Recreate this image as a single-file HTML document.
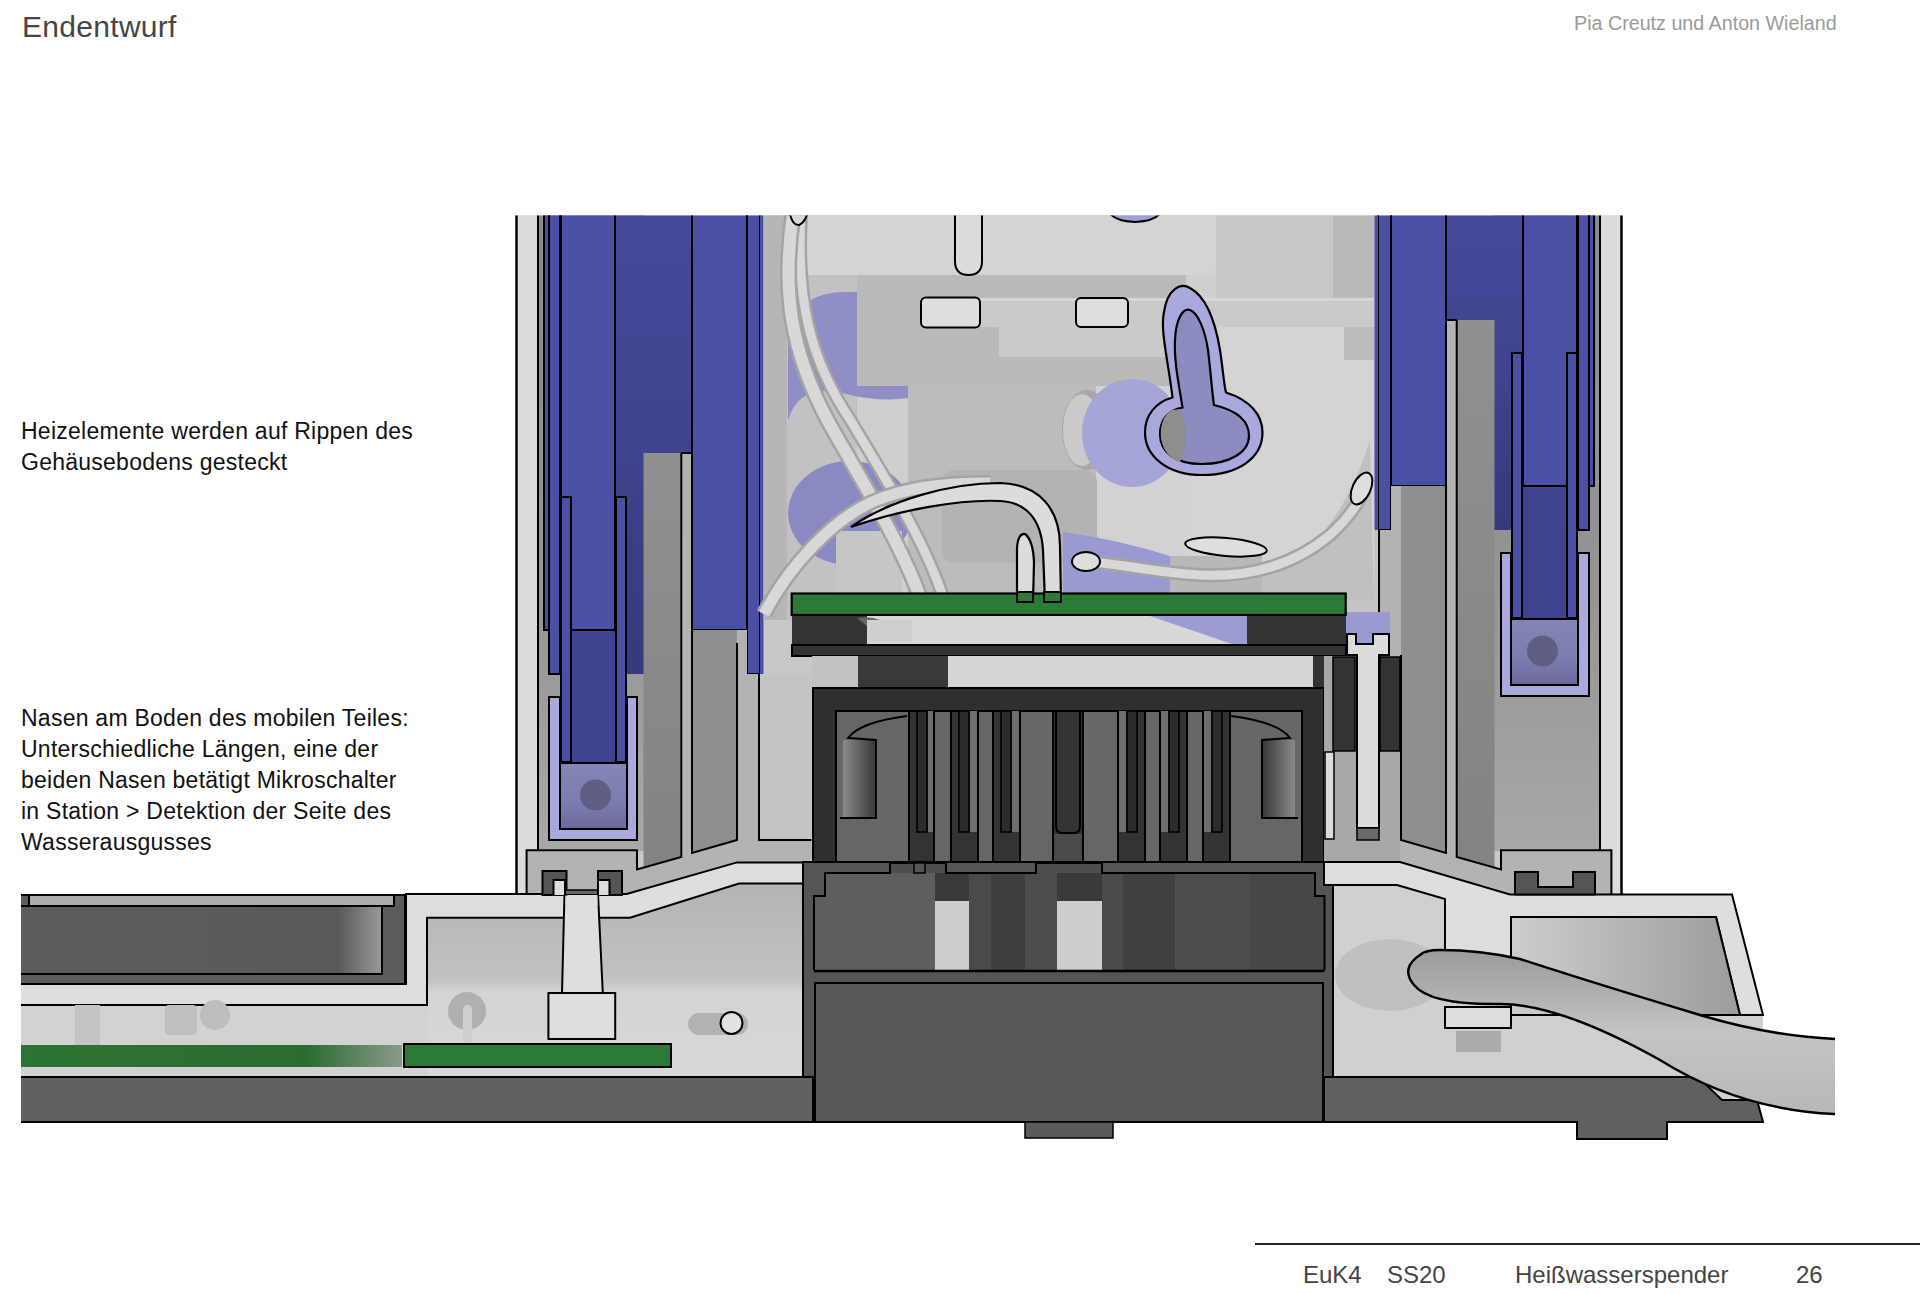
<!DOCTYPE html>
<html><head><meta charset="utf-8">
<style>
html,body{margin:0;padding:0;background:#fff;}
body{width:1920px;height:1294px;position:relative;overflow:hidden;font-family:"Liberation Sans",sans-serif;}
.t{position:absolute;white-space:nowrap;transform-origin:0 0;}
#title{left:22px;top:10px;font-size:30px;letter-spacing:0.3px;color:#454545;}
#authors{left:1574px;top:11.5px;font-size:19.7px;color:#9a9a9a;}
.p{left:21px;font-size:23px;color:#111;line-height:31px;letter-spacing:0.25px;}
#p1{top:416px;}
#p2{top:702.5px;}
#rule{position:absolute;left:1255px;top:1243px;width:665px;height:2px;background:#222;}
.f{top:1261px;font-size:24px;color:#444;}
svg{position:absolute;left:0;top:0;}
</style></head><body>
<svg width="1920" height="1294" viewBox="0 0 1920 1294">
<clipPath id="clipTop"><rect x="0" y="215.5" width="1920" height="1079"/></clipPath>
<g clip-path="url(#clipTop)"><defs>
<linearGradient id="gRecess" x1="0" x2="0" y1="0" y2="1"><stop offset="0" stop-color="#464a9a"/><stop offset="0.5" stop-color="#40438e"/><stop offset="1" stop-color="#36397a"/></linearGradient>
<linearGradient id="gZone" x1="0" x2="0" y1="0" y2="1"><stop offset="0" stop-color="#8a8a8a"/><stop offset="0.6" stop-color="#959595"/><stop offset="1" stop-color="#a8a8a8"/></linearGradient>
<linearGradient id="gBox" x1="0" x2="1" y1="0" y2="0"><stop offset="0" stop-color="#cdcdcd"/><stop offset="1" stop-color="#9c9c9c"/></linearGradient>
<linearGradient id="gRibV" x1="0" x2="0" y1="0" y2="1"><stop offset="0" stop-color="#909090"/><stop offset="1" stop-color="#838383"/></linearGradient>
<linearGradient id="gSq" x1="0" x2="0" y1="0" y2="1"><stop offset="0" stop-color="#8585b5"/><stop offset="0.6" stop-color="#7c7cae"/><stop offset="1" stop-color="#6a6a9c"/></linearGradient>
<linearGradient id="gPcbFade" x1="0" x2="1" y1="0" y2="0"><stop offset="0" stop-color="#2b7434"/><stop offset="0.75" stop-color="#2c6c30"/><stop offset="1" stop-color="#8a9a8a"/></linearGradient>
<linearGradient id="gCable" x1="0" x2="0" y1="0" y2="1"><stop offset="0" stop-color="#9a9a9a"/><stop offset="0.5" stop-color="#c4c4c4"/><stop offset="1" stop-color="#b8b8b8"/></linearGradient>
</defs>
<rect x="516.0" y="215.0" width="1106.0" height="680.0" fill="#c8c8c8" />
<rect x="763.0" y="215.0" width="611.0" height="405.0" fill="#cdcdcd" />
<rect x="516.5" y="215.0" width="21.0" height="680.0" fill="#dcdcdc" />
<polyline points="516.5,215.0 516.5,895.0" fill="none" stroke="#000" stroke-width="2.5" stroke-linejoin="miter" />
<polyline points="538.0,215.0 538.0,851.0" fill="none" stroke="#000" stroke-width="2" stroke-linejoin="miter" />
<rect x="1600.5" y="215.0" width="21.0" height="680.0" fill="#dcdcdc" />
<polyline points="1621.5,215.0 1621.5,895.0" fill="none" stroke="#000" stroke-width="2.5" stroke-linejoin="miter" />
<polyline points="1600.0,215.0 1600.0,851.0" fill="none" stroke="#000" stroke-width="2" stroke-linejoin="miter" />
<rect x="539.0" y="215.0" width="105.0" height="636.0" fill="url(#gZone)" />
<rect x="1494.0" y="215.0" width="105.0" height="636.0" fill="url(#gZone)" />
<polygon points="616.0,205.0 692.0,205.0 692.0,674.0 616.0,674.0" fill="url(#gRecess)" />
<polygon points="544.0,205.0 549.0,205.0 549.0,630.0 544.0,630.0" fill="#4b50a5" stroke="#000" stroke-width="2" stroke-linejoin="miter" />
<polygon points="549.0,205.0 560.0,205.0 560.0,674.0 549.0,674.0" fill="#4b50a5" stroke="#000" stroke-width="2" stroke-linejoin="miter" />
<polygon points="561.0,205.0 615.0,205.0 615.0,630.0 561.0,630.0" fill="#4b50a5" stroke="#000" stroke-width="2" stroke-linejoin="miter" />
<polygon points="572.0,631.0 615.0,631.0 615.0,763.0 572.0,763.0" fill="#3f428f" />
<polygon points="549.0,697.0 560.0,697.0 560.0,829.0 627.0,829.0 627.0,697.0 637.0,697.0 637.0,840.0 549.0,840.0" fill="#a9a9dd" stroke="#000" stroke-width="2" stroke-linejoin="miter" />
<polygon points="560.0,763.0 627.0,763.0 627.0,829.0 560.0,829.0" fill="url(#gSq)" stroke="#000" stroke-width="2" stroke-linejoin="miter" />
<circle cx="595.5" cy="795" r="15.5" fill="#5f5f84"/>
<polygon points="561.0,497.0 571.0,497.0 571.0,762.0 561.0,762.0" fill="#4b50a5" stroke="#000" stroke-width="2" stroke-linejoin="miter" />
<polygon points="616.0,497.0 626.0,497.0 626.0,762.0 616.0,762.0" fill="#4b50a5" stroke="#000" stroke-width="2" stroke-linejoin="miter" />
<polygon points="692.0,205.0 747.0,205.0 747.0,630.0 692.0,630.0" fill="#4b50a5" stroke="#000" stroke-width="2" stroke-linejoin="miter" />
<polygon points="747.0,205.0 760.0,205.0 760.0,674.0 747.0,674.0" fill="#4b50a5" stroke="#000" stroke-width="2" stroke-linejoin="miter" />
<polygon points="760.0,205.0 763.5,205.0 763.5,674.0 760.0,674.0" fill="#4b50a5" />
<polygon points="1522.0,205.0 1446.0,205.0 1446.0,530.0 1522.0,530.0" fill="url(#gRecess)" />
<polygon points="1594.0,205.0 1589.0,205.0 1589.0,486.0 1594.0,486.0" fill="#4b50a5" stroke="#000" stroke-width="2" stroke-linejoin="miter" />
<polygon points="1589.0,205.0 1578.0,205.0 1578.0,530.0 1589.0,530.0" fill="#4b50a5" stroke="#000" stroke-width="2" stroke-linejoin="miter" />
<polygon points="1577.0,205.0 1523.0,205.0 1523.0,486.0 1577.0,486.0" fill="#4b50a5" stroke="#000" stroke-width="2" stroke-linejoin="miter" />
<polygon points="1566.0,487.0 1523.0,487.0 1523.0,619.0 1566.0,619.0" fill="#3f428f" />
<polygon points="1589.0,553.0 1578.0,553.0 1578.0,685.0 1511.0,685.0 1511.0,553.0 1501.0,553.0 1501.0,696.0 1589.0,696.0" fill="#a9a9dd" stroke="#000" stroke-width="2" stroke-linejoin="miter" />
<polygon points="1578.0,619.0 1511.0,619.0 1511.0,685.0 1578.0,685.0" fill="url(#gSq)" stroke="#000" stroke-width="2" stroke-linejoin="miter" />
<circle cx="1542.5" cy="651" r="15.5" fill="#5f5f84"/>
<polygon points="1577.0,353.0 1567.0,353.0 1567.0,618.0 1577.0,618.0" fill="#4b50a5" stroke="#000" stroke-width="2" stroke-linejoin="miter" />
<polygon points="1522.0,353.0 1512.0,353.0 1512.0,618.0 1522.0,618.0" fill="#4b50a5" stroke="#000" stroke-width="2" stroke-linejoin="miter" />
<polygon points="1446.0,205.0 1391.0,205.0 1391.0,486.0 1446.0,486.0" fill="#4b50a5" stroke="#000" stroke-width="2" stroke-linejoin="miter" />
<polygon points="1391.0,205.0 1378.0,205.0 1378.0,530.0 1391.0,530.0" fill="#4b50a5" stroke="#000" stroke-width="2" stroke-linejoin="miter" />
<polygon points="1378.0,205.0 1374.5,205.0 1374.5,530.0 1378.0,530.0" fill="#4b50a5" />
<polygon points="681.0,453.0 692.0,453.0 692.0,630.0 747.0,630.0 747.0,674.0 759.0,674.0 759.0,840.0 811.5,840.0 811.5,862.0 737.0,862.0 620.0,895.0 526.6,895.0 526.6,850.3 637.0,850.3 637.0,869.5 681.0,857.0" fill="#b3b3b3" />
<polygon points="643.5,453.0 681.3,453.0 681.3,857.0 637.5,869.5 643.5,868.0" fill="url(#gRibV)" />
<polyline points="681.3,453.0 681.3,857.0 637.0,869.5 637.0,850.3 526.6,850.3 526.6,895.0" fill="none" stroke="#000" stroke-width="2" stroke-linejoin="miter" />
<polyline points="681.3,453.0 692.0,453.0 692.0,630.0" fill="none" stroke="#000" stroke-width="2" stroke-linejoin="miter" />
<polygon points="692.0,630.0 737.0,630.0 737.0,840.0 692.0,853.0" fill="#8f8f8f" />
<polyline points="692.0,630.0 692.0,853.0 737.0,840.0 737.0,643.0" fill="none" stroke="#000" stroke-width="2" stroke-linejoin="miter" />
<polygon points="759.0,674.0 811.5,674.0 811.5,840.0 759.0,840.0" fill="#c4c4c4" />
<polyline points="759.0,674.0 759.0,840.0 811.5,840.0" fill="none" stroke="#000" stroke-width="2" stroke-linejoin="miter" />
<polygon points="1457.0,320.0 1446.0,320.0 1446.0,486.0 1391.0,486.0 1391.0,530.0 1379.0,530.0 1379.0,840.0 1326.5,840.0 1326.5,862.0 1401.0,862.0 1518.0,895.0 1611.4,895.0 1611.4,850.3 1501.0,850.3 1501.0,869.5 1457.0,857.0" fill="#b3b3b3" />
<polygon points="1494.5,320.0 1456.7,320.0 1456.7,857.0 1500.5,869.5 1494.5,868.0" fill="url(#gRibV)" />
<polyline points="1456.7,320.0 1456.7,857.0 1501.0,869.5 1501.0,850.3 1611.4,850.3 1611.4,895.0" fill="none" stroke="#000" stroke-width="2" stroke-linejoin="miter" />
<polyline points="1456.7,320.0 1446.0,320.0 1446.0,486.0" fill="none" stroke="#000" stroke-width="2" stroke-linejoin="miter" />
<polygon points="1446.0,486.0 1401.0,486.0 1401.0,840.0 1446.0,853.0" fill="#8f8f8f" />
<polyline points="1446.0,486.0 1446.0,853.0 1401.0,840.0 1401.0,655.0" fill="none" stroke="#000" stroke-width="2" stroke-linejoin="miter" />
<polygon points="1379.0,530.0 1326.5,530.0 1326.5,840.0 1379.0,840.0" fill="#c4c4c4" />
<polyline points="1379.0,530.0 1379.0,840.0 1326.5,840.0" fill="none" stroke="#000" stroke-width="2" stroke-linejoin="miter" />
<rect x="763.5" y="215.0" width="36.5" height="405.0" fill="#b6b6b6" />
<rect x="800.0" y="215.0" width="574.0" height="385.0" fill="#cfcfcf" />
<path d="M800,215 H1216 V268 Q1216,275 1209,275 H808 Q800,275 800,268 Z" fill="#d4d4d4"/>
<rect x="787.0" y="275.0" width="70.0" height="345.0" fill="#c2c2c2" />
<path d="M788,330 Q800,290 850,292 L909,292 L909,398 Q880,402 850,395 Q800,380 788,420 Z" fill="#8f8fc6"/>
<ellipse cx="850" cy="513" rx="62" ry="52" fill="#8a8ac2"/>
<rect x="857.0" y="275.0" width="329.0" height="111.0" fill="#bababa" />
<rect x="908.0" y="386.0" width="188.0" height="207.0" fill="#bcbcbc" />
<rect x="1216.0" y="215.0" width="158.0" height="385.0" fill="#c8c8c8" />
<rect x="1333.0" y="216.0" width="41.0" height="82.0" fill="#bababa" />
<rect x="1186.0" y="327.0" width="188.0" height="273.0" fill="#d4d4d4" />
<rect x="1096.0" y="386.0" width="90.0" height="214.0" fill="#d2d2d2" />
<rect x="1344.0" y="327.0" width="30.0" height="33.0" fill="#bcbcbc" />
<path d="M1090,520 Q1120,600 1230,585 Q1330,570 1370,440 L1374,600 L1090,600 Z" fill="#c0c0c0"/>
<rect x="999.0" y="327.0" width="187.0" height="30.0" fill="#cbcbcb" />
<rect x="980.0" y="298.0" width="394.0" height="29.0" fill="#cacaca" />
<rect x="980.0" y="298.0" width="394.0" height="3.0" fill="#d6d6d6" />
<rect x="921" y="297.5" width="59" height="30" rx="5" fill="#dedede" stroke="#000" stroke-width="2"/>
<rect x="1076" y="298" width="52" height="29" rx="5" fill="#dedede" stroke="#000" stroke-width="2"/>
<path d="M955,205 V261 Q955,275 968.5,275 Q982,275 982,261 V205" fill="#dcdcdc" stroke="#000" stroke-width="2"/>
<path d="M1108,210 Q1112,221 1135,222 Q1158,221 1162,210 Z" fill="#a0a0d6" stroke="#000" stroke-width="2"/>
<rect x="836.0" y="531.0" width="66.0" height="62.0" fill="#c6c6c6" />
<rect x="942" y="470" width="155" height="93" rx="12" fill="#b3b3b3"/>
<path d="M1063,532 Q1120,540 1170,556 L1170,593 L1063,593 Z" fill="#9a9ad2"/>
<rect x="1190.0" y="612.0" width="200.0" height="34.0" fill="#9a9ad2" />
<rect x="1170.0" y="556.0" width="92.0" height="37.0" fill="#b8b8b8" />
<ellipse cx="1087" cy="430" rx="25" ry="40" fill="#a8a8a8"/>
<ellipse cx="1082" cy="430" rx="19" ry="36" fill="#cacaca"/>
<ellipse cx="1132" cy="433" rx="50" ry="54" fill="#a5a5d8"/>
<path d="M1172.5,397.5 C1168,360 1160,330 1164,312 C1167,290 1180,282 1190,288 C1205,296 1215,320 1220,350 C1223,370 1224,385 1226,392.5 C1250,400 1262.5,415 1262.5,432.5 C1262.5,458 1238,475 1202.5,475 C1167,475 1145,456 1145,432.5 C1145,415 1156,402 1172.5,397.5 Z" fill="#a9a9dd" stroke="#000" stroke-width="2.2"/>
<path d="M1182.5,407.5 C1178,380 1174,360 1175,340 C1176,318 1183,308 1190,310 C1198,313 1205,330 1208,350 C1211,375 1212,392 1214,405 C1235,410 1249,420 1249,436 C1249,452 1230,464 1202,464 C1175,464 1160,452 1160,434 C1160,420 1168,410 1182.5,407.5 Z" fill="#8c8cc0" stroke="#000" stroke-width="2.2"/>
<path d="M1172,410 C1162,416 1160,428 1161,438 C1163,452 1172,460 1180,462 C1188,448 1188,425 1180,409 Z" fill="#8e8e8e"/>
<path d="M801,214 C796,300 810,360 851,421 C880,470 925,540 944,600" fill="none" stroke="#a4a4a4" stroke-width="14" stroke-linecap="butt"/>
<path d="M801,214 C796,300 810,360 851,421 C880,470 925,540 944,600" fill="none" stroke="#d8d8d8" stroke-width="9" stroke-linecap="butt"/>
<path d="M793,214 C782,290 790,350 828,421 C855,470 900,540 921,600" fill="none" stroke="#a4a4a4" stroke-width="17" stroke-linecap="butt"/>
<path d="M793,214 C782,290 790,350 828,421 C855,470 900,540 921,600" fill="none" stroke="#d8d8d8" stroke-width="12" stroke-linecap="butt"/>
<path d="M764,614 C790,565 830,522 872,502 C905,488 940,483 990,483" fill="none" stroke="#a4a4a4" stroke-width="16" stroke-linecap="butt"/>
<path d="M764,614 C790,565 830,522 872,502 C905,488 940,483 990,483" fill="none" stroke="#d8d8d8" stroke-width="11" stroke-linecap="butt"/>
<path d="M789,210 Q792,226 799,225 Q806,222 808,210 Z" fill="#dadada" stroke="#000" stroke-width="2"/>
<path d="M851,527 C890,500 950,483 1000,483 C1040,484 1060,510 1060,546 L1061,602 H1045 L1043,550 C1041,518 1025,502 1000,501 C960,499 900,510 851,527 Z" fill="#dcdcdc" stroke="#000" stroke-width="2.2"/>
<path d="M1017,602 V548 Q1018,533 1025,534 Q1033,540 1034,562 L1033,602" fill="#dcdcdc" stroke="#000" stroke-width="2.2"/>
<path d="M1090,562 C1130,565 1150,572 1200,575 C1260,578 1300,560 1330,535 C1355,512 1362,495 1364,488" fill="none" stroke="#a4a4a4" stroke-width="14" stroke-linecap="butt"/>
<path d="M1090,562 C1130,565 1150,572 1200,575 C1260,578 1300,560 1330,535 C1355,512 1362,495 1364,488" fill="none" stroke="#d8d8d8" stroke-width="9" stroke-linecap="butt"/>
<ellipse cx="1086" cy="561.5" rx="14" ry="9.5" fill="#dedede" stroke="#000" stroke-width="2"/>
<ellipse cx="1226" cy="547" rx="41" ry="9" transform="rotate(5 1226 547)" fill="#dedede" stroke="#000" stroke-width="2"/>
<ellipse cx="1361.5" cy="488.5" rx="9" ry="17" transform="rotate(25 1361.5 488.5)" fill="#dedede" stroke="#000" stroke-width="2"/>
<rect x="791.7" y="593.5" width="554.0" height="21.5" fill="#2b7a36" stroke="#000" stroke-width="2.2" />
<rect x="1017.0" y="592.0" width="16.0" height="10.0" fill="#2b7a36" stroke="#000" stroke-width="2" />
<rect x="1044.0" y="592.0" width="17.0" height="10.0" fill="#2b7a36" stroke="#000" stroke-width="2" />
<rect x="792.0" y="616.0" width="554.0" height="29.0" fill="#d8d8d8" />
<rect x="792.0" y="616.0" width="75.0" height="29.0" fill="#333333" />
<rect x="1247.0" y="616.0" width="99.0" height="29.0" fill="#333333" />
<path d="M1150,616 H1247 V644 H1232 Z" fill="#9c9cd4"/>
<path d="M857,618 Q870,616 880,620 L867,626 Z" fill="#666"/>
<rect x="867.0" y="620.0" width="45.0" height="22.0" fill="#cfcfcf" />
<rect x="792.0" y="645.0" width="554.0" height="11.0" fill="#333333" stroke="#000" stroke-width="2" />
<rect x="812.0" y="656.0" width="46.0" height="33.0" fill="#c2c2c2" />
<rect x="858.0" y="656.0" width="90.0" height="33.0" fill="#393939" />
<rect x="948.0" y="656.0" width="365.0" height="33.0" fill="#d6d6d6" />
<rect x="1313.0" y="656.0" width="33.0" height="33.0" fill="#333333" />
<rect x="813.0" y="688.0" width="511.0" height="174.0" fill="#2f2f2f" stroke="#000" stroke-width="2" />
<rect x="836.0" y="711.0" width="466.0" height="151.0" fill="#666666" stroke="#000" stroke-width="2" />
<defs><linearGradient id="gHook" x1="0" x2="1"><stop offset="0" stop-color="#8a8a8a"/><stop offset="1" stop-color="#3a3a3a"/></linearGradient><linearGradient id="gHookR" x1="0" x2="1"><stop offset="0" stop-color="#3a3a3a"/><stop offset="1" stop-color="#8a8a8a"/></linearGradient></defs>
<rect x="843.0" y="740.0" width="32.0" height="78.0" fill="url(#gHook)" />
<path d="M907,716 Q860,722 848,738 L876,740 V818 H840" fill="none" stroke="#000" stroke-width="2"/>
<rect x="1263.0" y="740.0" width="32.0" height="78.0" fill="url(#gHookR)" />
<path d="M1231,716 Q1278,722 1290,738 L1262,740 V818 H1298" fill="none" stroke="#000" stroke-width="2"/>
<rect x="909.0" y="711.0" width="25.0" height="151.0" fill="#333333" stroke="#000" stroke-width="2" />
<rect x="917.0" y="711.0" width="10.0" height="121.0" fill="#2c2c2c" stroke="#000" stroke-width="1.6" />
<rect x="928.0" y="711.0" width="5.0" height="121.0" fill="#6e6e6e" />
<rect x="951.0" y="711.0" width="27.0" height="151.0" fill="#333333" stroke="#000" stroke-width="2" />
<rect x="959.0" y="711.0" width="10.0" height="121.0" fill="#2c2c2c" stroke="#000" stroke-width="1.6" />
<rect x="970.0" y="711.0" width="7.0" height="121.0" fill="#6e6e6e" />
<rect x="993.0" y="711.0" width="27.0" height="151.0" fill="#333333" stroke="#000" stroke-width="2" />
<rect x="1001.0" y="711.0" width="10.0" height="121.0" fill="#2c2c2c" stroke="#000" stroke-width="1.6" />
<rect x="1012.0" y="711.0" width="7.0" height="121.0" fill="#6e6e6e" />
<rect x="1053.0" y="711.0" width="30.0" height="151.0" fill="#333333" stroke="#000" stroke-width="2" />
<rect x="1054.0" y="834.0" width="28.0" height="27.0" fill="#4a4a4a" />
<path d="M1056,711 V826 Q1056,833 1062,833 H1074 Q1080,833 1080,826 V711" fill="none" stroke="#000" stroke-width="2"/>
<rect x="1118.0" y="711.0" width="27.0" height="151.0" fill="#333333" stroke="#000" stroke-width="2" />
<rect x="1127.0" y="711.0" width="10.0" height="121.0" fill="#2c2c2c" stroke="#000" stroke-width="1.6" />
<rect x="1119.0" y="711.0" width="7.0" height="121.0" fill="#6e6e6e" />
<rect x="1160.0" y="711.0" width="27.0" height="151.0" fill="#333333" stroke="#000" stroke-width="2" />
<rect x="1169.0" y="711.0" width="10.0" height="121.0" fill="#2c2c2c" stroke="#000" stroke-width="1.6" />
<rect x="1161.0" y="711.0" width="7.0" height="121.0" fill="#6e6e6e" />
<rect x="1203.0" y="711.0" width="27.0" height="151.0" fill="#333333" stroke="#000" stroke-width="2" />
<rect x="1212.0" y="711.0" width="10.0" height="121.0" fill="#2c2c2c" stroke="#000" stroke-width="1.6" />
<rect x="1204.0" y="711.0" width="7.0" height="121.0" fill="#6e6e6e" />
<rect x="1324.0" y="656.0" width="76.0" height="206.0" fill="#a8a8a8" />
<rect x="1333.0" y="657.0" width="22.0" height="94.0" fill="#333333" stroke="#000" stroke-width="1.5" />
<rect x="1380.0" y="657.0" width="20.0" height="94.0" fill="#333333" stroke="#000" stroke-width="1.5" />
<rect x="1325.0" y="752.0" width="9.0" height="87.0" fill="#dcdcdc" stroke="#000" stroke-width="1.5" />
<path d="M1347,634 H1356 V644 H1373 V634 H1389 V655 H1379 V828 H1357 V655 H1347 Z" fill="#dcdcdc" stroke="#000" stroke-width="2"/>
<rect x="1357.0" y="828.0" width="22.0" height="12.0" fill="#6a6a6a" stroke="#000" stroke-width="1.5" />
<defs><linearGradient id="gInt" gradientUnits="userSpaceOnUse" x1="0" y1="884" x2="0" y2="1077"><stop offset="0" stop-color="#b4b4b4"/><stop offset="0.5" stop-color="#c2c2c2"/><stop offset="0.56" stop-color="#d4d4d4"/><stop offset="1" stop-color="#d8d8d8"/></linearGradient></defs>
<polygon points="427.0,917.0 630.0,917.0 739.0,884.0 803.0,884.0 803.0,1077.0 427.0,1077.0" fill="url(#gInt)" />
<circle cx="467" cy="1011" r="19" fill="#b0b0b0"/><rect x="463" y="1005" width="9" height="40" rx="4.5" fill="#cfcfcf"/>
<rect x="688" y="1013" width="60" height="22" rx="11" fill="#b2b2b2"/>
<polygon points="406.0,894.0 626.6,894.0 737.0,862.4 811.7,862.4 811.7,883.6 739.0,883.6 630.0,917.7 427.0,917.7 427.0,1005.0 21.0,1005.0 21.0,984.0 406.0,984.0" fill="#dedede" />
<polyline points="21.0,1005.0 427.0,1005.0 427.0,917.7 630.0,917.7 739.0,883.6 811.7,883.6 811.7,862.4 737.0,862.4 626.6,894.0 406.0,894.0 406.0,984.0 21.0,984.0" fill="none" stroke="#000" stroke-width="2" stroke-linejoin="miter" />
<rect x="803.0" y="862.0" width="530.0" height="260.0" fill="#555555" stroke="#000" stroke-width="2" />
<path d="M814,970 V896 H825 V873 H890 V863 H946 V873 H1036 V863 H1102 V873 H1315 V896 H1324.5 V970 Z" fill="#4e4e4e"/>
<rect x="825.0" y="873.0" width="110.0" height="97.0" fill="#5e5e5e" />
<rect x="814.0" y="896.0" width="11.0" height="74.0" fill="#5e5e5e" />
<rect x="935.0" y="873.0" width="34.0" height="28.0" fill="#3a3a3a" />
<rect x="935.0" y="901.0" width="34.0" height="69.0" fill="#cdcdcd" />
<rect x="969.0" y="873.0" width="22.0" height="97.0" fill="#4a4a4a" />
<rect x="991.0" y="873.0" width="34.0" height="97.0" fill="#3e3e3e" />
<rect x="1025.0" y="873.0" width="32.0" height="97.0" fill="#4c4c4c" />
<rect x="1057.0" y="873.0" width="45.0" height="28.0" fill="#3a3a3a" />
<rect x="1057.0" y="901.0" width="45.0" height="69.0" fill="#cdcdcd" />
<rect x="1102.0" y="873.0" width="21.0" height="97.0" fill="#4a4a4a" />
<rect x="1123.0" y="873.0" width="52.0" height="97.0" fill="#404040" />
<rect x="1175.0" y="873.0" width="75.0" height="97.0" fill="#4d4d4d" />
<rect x="1250.0" y="873.0" width="65.0" height="97.0" fill="#474747" />
<rect x="1315.0" y="896.0" width="9.5" height="74.0" fill="#474747" />
<path d="M814,970 V896 H825 V873 H890 V863 H946 V873 H1036 V863 H1102 V873 H1315 V896 H1324.5 V970" fill="none" stroke="#000" stroke-width="2"/>
<rect x="914.0" y="863.0" width="11.0" height="10.0" fill="#555" stroke="#000" stroke-width="1.5" />
<polyline points="814.0,971.0 1324.5,971.0" fill="none" stroke="#000" stroke-width="2.5" stroke-linejoin="miter" />
<rect x="815.0" y="983.0" width="508.0" height="139.0" fill="#575757" stroke="#000" stroke-width="2" />
<rect x="1025.0" y="1122.0" width="88.0" height="16.0" fill="#5a5a5a" stroke="#000" stroke-width="1.5" />
<rect x="21.0" y="1006.0" width="406.0" height="71.0" fill="#d2d2d2" />
<rect x="75.0" y="1005.0" width="25.0" height="40.0" fill="#c4c4c4" />
<rect x="165" y="1005" width="32" height="30" rx="4" fill="#c0c0c0"/>
<circle cx="215" cy="1015" r="15" fill="#bdbdbd"/>
<rect x="21.0" y="895.0" width="384.0" height="89.0" fill="#5c5c5c" />
<polyline points="21.0,895.0 405.0,895.0 405.0,984.0 21.0,984.0" fill="none" stroke="#000" stroke-width="2" stroke-linejoin="miter" />
<rect x="29.0" y="895.0" width="365.0" height="11.0" fill="#acacac" stroke="#000" stroke-width="2" />
<defs><linearGradient id="gDB" gradientUnits="userSpaceOnUse" x1="21" y1="0" x2="382" y2="0"><stop offset="0" stop-color="#5c5c5c"/><stop offset="0.88" stop-color="#5a5a5a"/><stop offset="1" stop-color="#9a9a9a"/></linearGradient></defs>
<rect x="21.0" y="906.0" width="361.0" height="68.0" fill="url(#gDB)" />
<polyline points="21.0,906.0 382.0,906.0 382.0,974.0 21.0,974.0" fill="none" stroke="#000" stroke-width="2" stroke-linejoin="miter" />
<rect x="21.0" y="1045.0" width="381.0" height="22.0" fill="url(#gPcbFade)" />
<rect x="404.0" y="1044.0" width="267.0" height="23.0" fill="#2b7a36" stroke="#000" stroke-width="2" />
<path d="M564.5,894 L562,993 L602.8,993 L598,894 Z" fill="#dedede" stroke="#000" stroke-width="2"/>
<rect x="548.4" y="993.0" width="66.8" height="46.0" fill="#dedede" stroke="#000" stroke-width="2" />
<circle cx="731.5" cy="1023" r="11" fill="#e2e2e2" stroke="#000" stroke-width="2"/>
<rect x="21.0" y="1077.0" width="792.0" height="45.0" fill="#616161" />
<polyline points="21.0,1077.0 813.0,1077.0 813.0,1122.0 21.0,1122.0" fill="none" stroke="#000" stroke-width="2" stroke-linejoin="miter" />
<rect x="542.5" y="871.0" width="24.0" height="24.0" fill="#555555" stroke="#000" stroke-width="2" />
<rect x="598.0" y="871.0" width="24.0" height="24.0" fill="#555555" stroke="#000" stroke-width="2" />
<path d="M553.5,895 V880 H565 V895" fill="#dedede" stroke="#000" stroke-width="2"/>
<path d="M609.5,895 V880 H598 V895" fill="#dedede" stroke="#000" stroke-width="2"/>
<rect x="566.0" y="890.0" width="31.0" height="4.0" fill="#666666" />
<polyline points="565.0,890.0 598.0,890.0" fill="none" stroke="#000" stroke-width="1.5" stroke-linejoin="miter" />
<rect x="565.5" y="895.5" width="32.0" height="9.5" fill="#dedede" />
<rect x="1334.0" y="885.0" width="112.0" height="192.0" fill="#d0d0d0" />
<rect x="1446.0" y="915.0" width="176.0" height="162.0" fill="#d0d0d0" />
<rect x="1600.0" y="1010.0" width="163.0" height="90.0" fill="#d0d0d0" />
<path d="M1324,862 H1400 L1510,894.5 H1732 L1763,1015 L1740,1015 L1716,917 H1511 V975 H1445 V899 L1397,885 H1324 Z" fill="#dedede" stroke="#000" stroke-width="2"/>
<path d="M1511,917 H1716 L1740,1015 L1511,1015 Z" fill="url(#gBox)" stroke="#000" stroke-width="2"/>
<path d="M1324,1077 H1698 L1722,1100 H1757 L1763,1122 H1667 V1139 H1577 V1122 H1324 Z" fill="#606060" stroke="#000" stroke-width="2"/>
<rect x="1456.0" y="1031.0" width="45.0" height="21.0" fill="#ababab" />
<rect x="1445.0" y="1007.0" width="66.0" height="21.0" fill="#dedede" stroke="#000" stroke-width="2" />
<ellipse cx="1390" cy="975" rx="55" ry="36" fill="#c0c0c0"/>
<path d="M1420,955 Q1400,968 1414,985 Q1430,1005 1500,1004 Q1560,1004 1660,1060 Q1740,1110 1835,1114 V1039 Q1770,1036 1700,1015 Q1600,985 1520,959 Q1480,950 1440,950 Q1425,950 1420,955 Z" fill="url(#gCable)"/>
<path d="M1835,1114 Q1740,1110 1660,1060 Q1560,1004 1500,1004 Q1430,1005 1414,985 Q1400,968 1420,955 Q1425,950 1440,950 Q1480,950 1520,959 Q1600,985 1700,1015 Q1770,1036 1835,1039" fill="none" stroke="#000" stroke-width="2.5"/>
<path d="M1515,872 H1538 V887 H1573 V872 H1595 V894.5 H1515 Z" fill="#555555" stroke="#000" stroke-width="2"/>
</g>
</svg>
<div class="t" id="title">Endentwurf</div>
<div class="t" id="authors">Pia Creutz und Anton Wieland</div>
<div class="t p" id="p1">Heizelemente werden auf Rippen des<br>Gehäusebodens gesteckt</div>
<div class="t p" id="p2">Nasen am Boden des mobilen Teiles:<br>Unterschiedliche Längen, eine der<br>beiden Nasen betätigt Mikroschalter<br>in Station &gt; Detektion der Seite des<br>Wasserausgusses</div>
<div id="rule"></div>
<div class="t f" style="left:1303px">EuK4</div>
<div class="t f" style="left:1387px">SS20</div>
<div class="t f" style="left:1515px">Heißwasserspender</div>
<div class="t f" style="left:1796px">26</div>
</body></html>
